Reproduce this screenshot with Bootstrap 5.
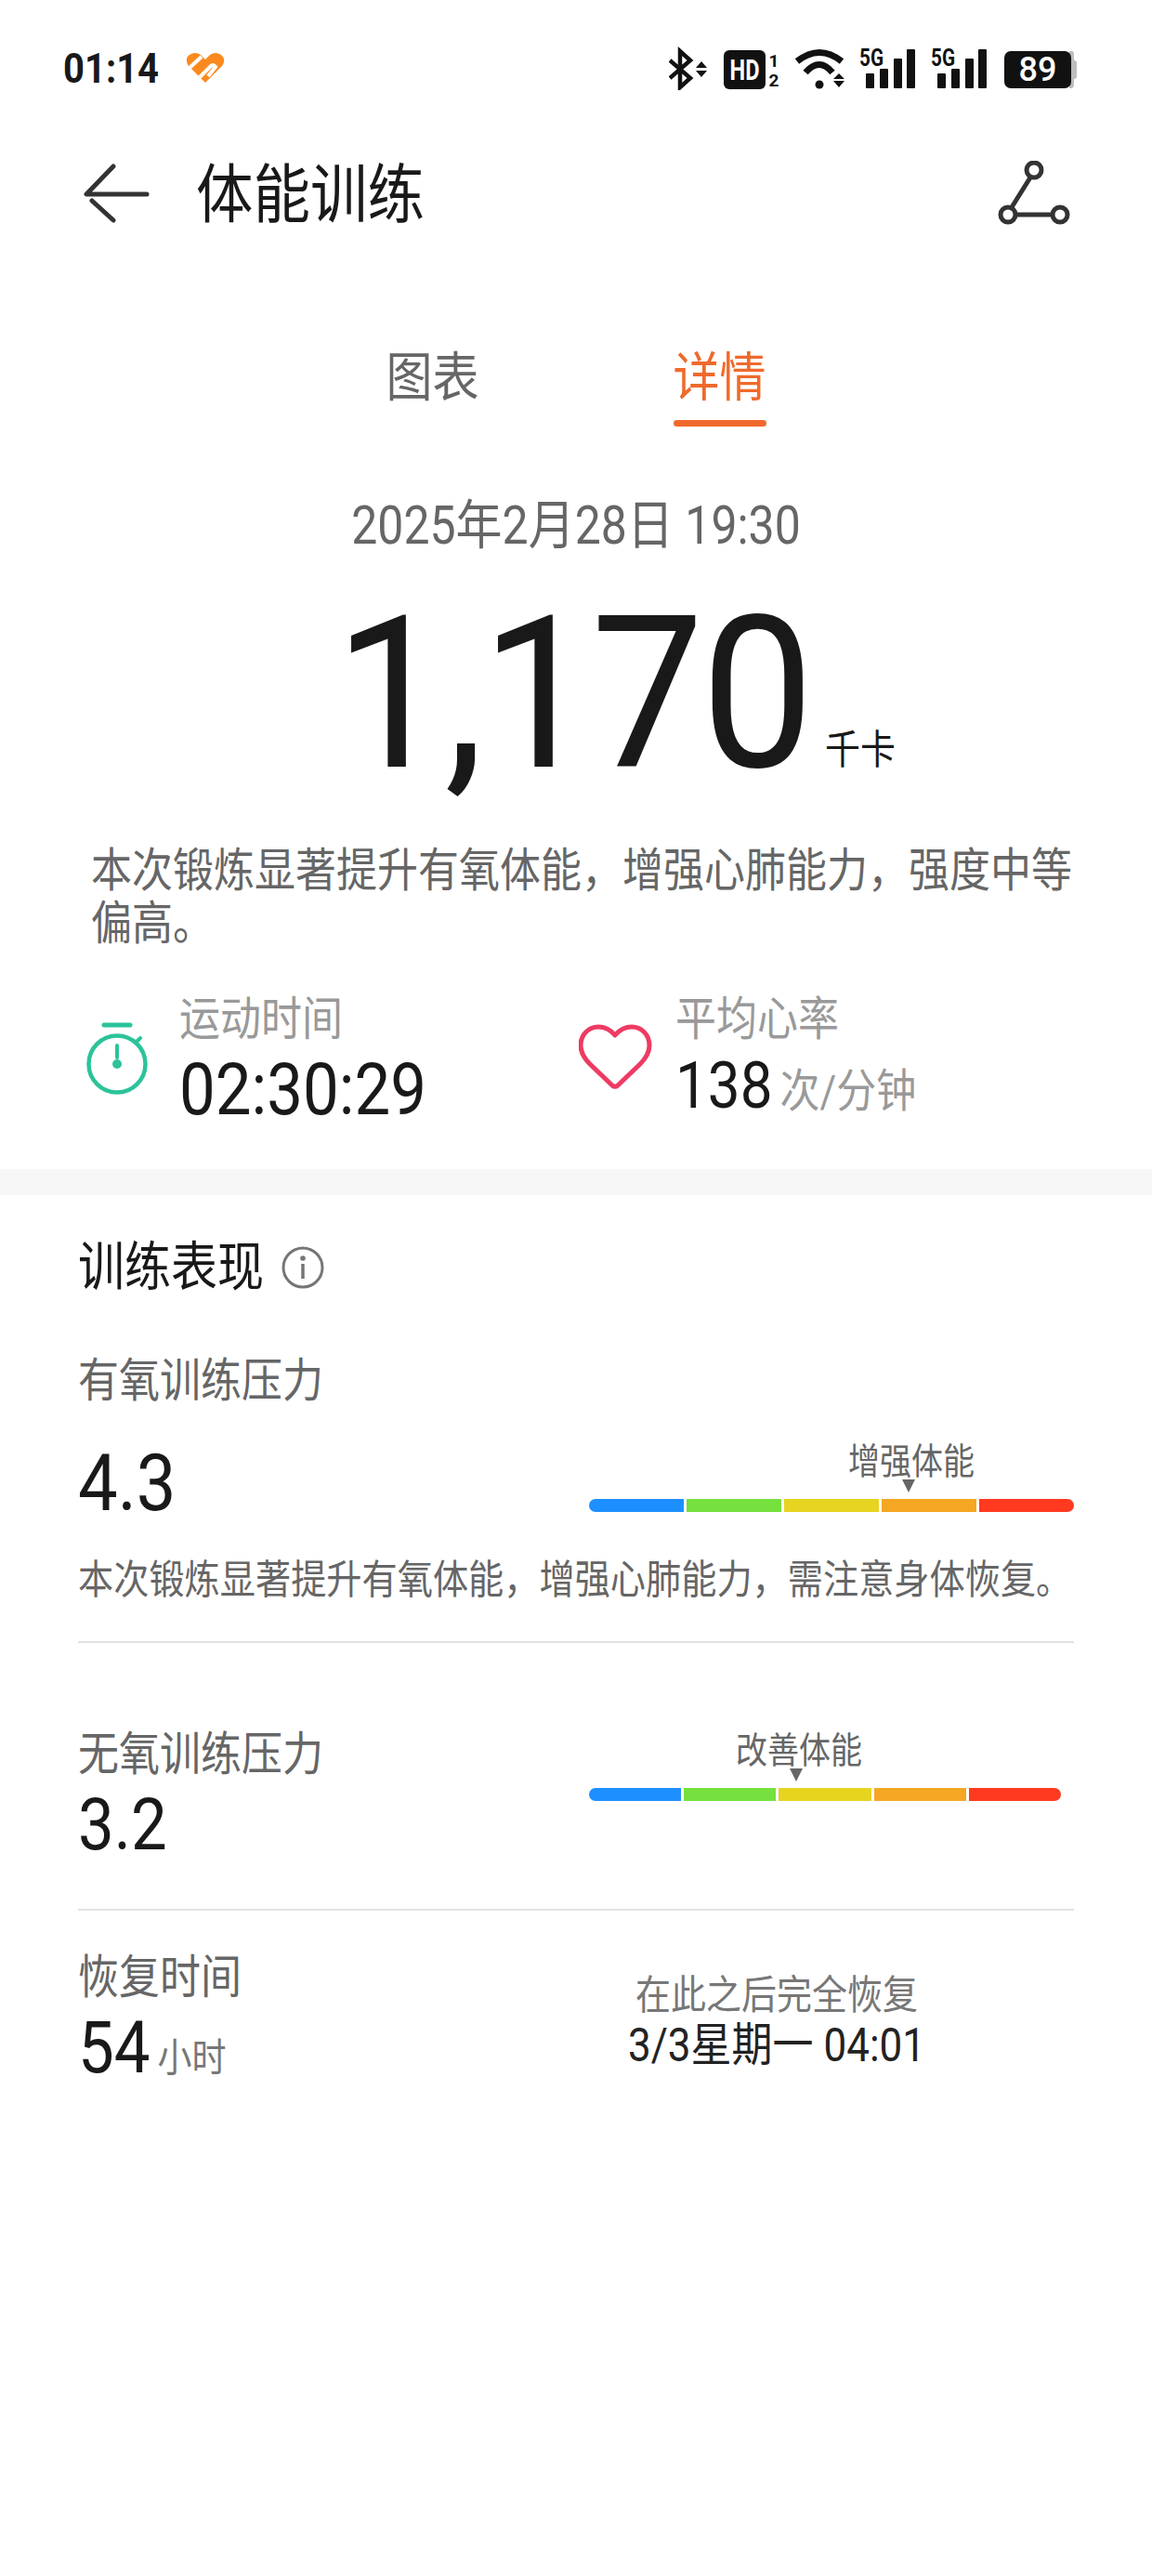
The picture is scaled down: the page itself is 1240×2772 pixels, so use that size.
<!DOCTYPE html>
<html lang="zh">
<head>
<meta charset="UTF-8">
<meta name="viewport" content="width=device-width, initial-scale=1.0">
<title>体能训练</title>
<link href="https://cdn.jsdelivr.net/npm/bootstrap@5.3.0/dist/css/bootstrap.min.css" rel="stylesheet">
<style>
body { background: #fff; font-family: Roboto, "Noto Sans CJK SC", sans-serif; color: #191919; }
.tall { display: inline-block; transform: scaleY(1.13); }
.status-row { height: 150px; padding: 47px 79px 0 68px; }
.status-left { gap: 29px; padding-top: 5px; }
.status-right { gap: 17px; }
.clock { font-size: 40px; font-weight: 700; line-height: 44px; }
.status-row svg { display: block; }
.wifi-icon { margin-right: -2px; }
.battery-icon { margin-left: 2px; }
.top-row { height: 116px; padding: 0 88px 0 90px; }
.page-title { font-size: 61.5px; line-height: 116px; margin-left: 49px; padding-top: 3px; }
.tab-row { margin-top: 106px; height: 87px; gap: 209px; }
.tab-item { width: 100px; text-align: center; font-size: 50px; line-height: 70px; color: #666; height: 87px; white-space: nowrap; }
.tab-on { color: #ef6a2c; }
.tab-line { height: 7px; margin-top: 10px; border-radius: 4px; background: #ef6a2c; }
.date-line { margin-top: 77px; font-size: 50px; line-height: 60px; color: #666; }
.big-row { margin-top: 47px; height: 210px; padding-left: 360px; }
.big-num { font-size: 216px; line-height: 210px; letter-spacing: -3px; transform: scaleY(1.06); }
.big-unit { font-size: 38px; line-height: 44px; margin: 0 0 24px 15px; }
.intro { margin: 56px 40px 0 98px; font-size: 44px; line-height: 57px; color: #666; }
.stat-row { margin-top: 46px; padding-left: 91px; }
.stat-left { width: 532px; gap: 32px; }
.stat-right { gap: 24px; }
.stat-label { font-size: 44px; line-height: 56px; color: #999; margin-bottom: 7px; }
.stat-val { font-size: 69px; line-height: 82px; }
.stat-val-box { height: 75px; margin-top: -7px; }
.stat-val-sm { font-size: 62px; }
.stat-unit { font-size: 43px; color: #999; margin-left: 8px; }
.stopwatch { margin-top: 31px; }
.heart-icon { margin-top: 33px; }
.band { height: 28px; background: #f7f7f7; margin-top: 44px; }
.perf { padding: 0 84px; }
.perf-head { margin-top: 48px; font-size: 50px; line-height: 60px; gap: 19px; }
.perf-label { font-size: 44px; line-height: 56px; color: #666; margin-bottom: 7px; }
.perf-val { font-size: 76px; line-height: 80px; margin-top: 4px; }
.perf-col { width: 550px; }
.label-a { margin-top: 64px; margin-bottom: 0; }
.row-a { margin-top: 38px; }
.row-b { margin-top: 92px; }
.row-c { margin-top: 44px; }
.meter { width: 522px; }
.meter-short { width: 508px; margin-top: 3px; }
.meter-tag { font-size: 34px; line-height: 40px; color: #666; white-space: nowrap; }
.meter-pin { width: fit-content; }
.meter-arrow { width: 0; height: 0; border-left: 7px solid transparent; border-right: 7px solid transparent; border-top: 14px solid #666; margin-left: -6px; }
.meter-bar { gap: 3px; height: 14px; margin-top: 7px; }
.meter-bar > div { flex: 1; }
.seg1 { background: #1e8fff; border-radius: 7px 0 0 7px; }
.seg2 { background: #76e03f; }
.seg3 { background: #e6d420; }
.seg4 { background: #f5a623; }
.seg5 { background: #ff3a20; border-radius: 0 7px 7px 0; }
.perf-note { margin-top: 39px; font-size: 38.2px; line-height: 50px; color: #666; white-space: nowrap; }
.rule { border-top: 2px solid #e2e2e2; }
.rule-a { margin-top: 41px; }
.rule-b { margin-top: 49px; }
.small-unit { font-size: 37px; color: #777; margin-left: 8px; }
.recover-col { width: 592px; }
.recover { width: 320px; padding-top: 20px; text-align: center; }
.recover-a { font-size: 38px; line-height: 54px; color: #777; white-space: nowrap; }
.recover-b { font-size: 44px; line-height: 54px; color: #222; white-space: nowrap; margin-left: -10px; margin-right: -10px; }
</style>
</head>
<body>

<div class="status-row d-flex justify-content-between">
    <div class="status-left d-flex align-items-start">
        <span class="clock tall">01:14</span>
        <svg width="42" height="34" viewBox="0 0 42 34" class="mt-1">
            <path d="M21 33 L3 15 Q-2 7 4 3 Q10 -1 16 3 L21 8 L26 3 Q32 -1 38 3 Q44 8 39 15 Z" fill="#fb8a1e"/>
            <path d="M4 17 L17 5 M15 27 L27 15 Q30 13 32 16 L24 26" stroke="#fff" stroke-width="4" fill="none"/>
        </svg>
    </div>
    <div class="status-right d-flex align-items-start">
        <svg width="42" height="50" viewBox="0 -6 42 50">
            <path d="M1 12 L23 31 L12 41 V2 L23 12 L1 31" fill="none" stroke="#111" stroke-width="4.5"/>
            <path d="M29 20 L35 13 L41 20 Z M29 23 L35 30 L41 23 Z" fill="#111"/>
        </svg>
        <svg width="60" height="50" viewBox="0 -6 60 50">
            <rect x="0" y="1" width="45" height="42" rx="6" fill="#111"/>
            <text x="22.5" y="33" text-anchor="middle" font-family="Roboto" font-weight="700" font-size="32" fill="#fff" textLength="32" lengthAdjust="spacingAndGlyphs">HD</text>
            <text x="54" y="19" text-anchor="middle" font-family="Roboto" font-weight="700" font-size="19" fill="#111">1</text>
            <text x="54" y="40" text-anchor="middle" font-family="Roboto" font-weight="700" font-size="19" fill="#111">2</text>
        </svg>
        <svg width="54" height="50" viewBox="0 -6 54 50" class="wifi-icon">
            <path d="M2 13 Q26 -6 50 13 M11 25 Q26 8 40 25" fill="none" stroke="#111" stroke-width="7"/>
            <circle cx="26" cy="38" r="4.5" fill="#111"/>
            <path d="M41 32 L47 26 L53 32 Z M41 34 L47 41 L53 34 Z" fill="#111"/>
        </svg>
        <svg width="60" height="50" viewBox="0 -6 60 50">
            <text x="0" y="18" font-family="Roboto" font-weight="700" font-size="26" fill="#111" textLength="26" lengthAdjust="spacingAndGlyphs">5G</text>
            <rect x="7" y="26" width="9" height="16" rx="1" fill="#111"/>
            <rect x="22" y="21" width="9" height="21" rx="1" fill="#111"/>
            <rect x="37" y="10" width="9" height="32" rx="1" fill="#111"/>
            <rect x="51" y="0" width="9" height="42" rx="1" fill="#111"/>
        </svg>
        <svg width="60" height="50" viewBox="0 -6 60 50">
            <text x="0" y="18" font-family="Roboto" font-weight="700" font-size="26" fill="#111" textLength="26" lengthAdjust="spacingAndGlyphs">5G</text>
            <rect x="7" y="26" width="9" height="16" rx="1" fill="#111"/>
            <rect x="22" y="21" width="9" height="21" rx="1" fill="#111"/>
            <rect x="37" y="10" width="9" height="32" rx="1" fill="#111"/>
            <rect x="51" y="0" width="9" height="42" rx="1" fill="#111"/>
        </svg>
        <svg width="80" height="50" viewBox="0 -6 80 50" class="battery-icon">
            <path d="M70 2 H73 Q75 2 75 6 V12 Q78 12 78 15 V29 Q78 32 75 32 V38 Q75 42 72 42 H70 Z" fill="#bdbdbd"/>
            <rect x="0" y="2" width="72" height="40" rx="7" fill="#111"/>
            <text x="36" y="34" text-anchor="middle" font-family="Roboto" font-weight="500" font-size="36" fill="#fff">89</text>
        </svg>
    </div>
</div>

<div class="top-row d-flex align-items-center">
    <svg width="72" height="64" viewBox="0 0 72 64">
        <path d="M32 3 L3 33 H68 M9 40 L32 61" fill="none" stroke="#333" stroke-width="5" stroke-linecap="round" stroke-linejoin="round"/>
    </svg>
    <div class="page-title flex-grow-1"><span class="tall">体能训练</span></div>
    <svg width="78" height="70" viewBox="0 0 78 70">
        <path d="M35 18 L15 50 M19 58 H59" fill="none" stroke="#333" stroke-width="5"/>
        <circle cx="39" cy="10" r="8" fill="none" stroke="#333" stroke-width="5"/>
        <circle cx="11" cy="58" r="8" fill="none" stroke="#333" stroke-width="5"/>
        <circle cx="67" cy="58" r="8" fill="none" stroke="#333" stroke-width="5"/>
    </svg>
</div>

<div class="tab-row d-flex justify-content-center">
    <div class="tab-item"><span class="tall">图表</span></div>
    <div class="tab-item tab-on"><span class="tall">详情</span><div class="tab-line"></div></div>
</div>

<div class="date-line text-center"><span class="tall">2025年2月28日 19:30</span></div>

<div class="big-row d-flex align-items-end">
    <span class="big-num tall">1,170</span>
    <span class="big-unit tall">千卡</span>
</div>

<p class="intro mb-0"><span class="tall">本次锻炼显著提升有氧体能，增强心肺能力，强度中等</span><br><span class="tall">偏高。</span></p>

<div class="stat-row d-flex">
    <div class="stat-left d-flex align-items-start">
        <svg width="70" height="80" viewBox="0 0 70 80" class="stopwatch">
            <path d="M21 3 H49" stroke="#2cc39a" stroke-width="5" stroke-linecap="round" fill="none"/>
            <circle cx="35" cy="45" r="30.5" fill="none" stroke="#2cc39a" stroke-width="4.5"/>
            <path d="M35 25 V38 M55 22 L60 17" stroke="#2cc39a" stroke-width="4" stroke-linecap="round" fill="none"/>
            <circle cx="35" cy="45" r="5" fill="#2cc39a"/>
        </svg>
        <div>
            <div class="stat-label"><span class="tall">运动时间</span></div>
            <div class="stat-val"><span class="tall">02:30:29</span></div>
        </div>
    </div>
    <div class="stat-right d-flex align-items-start">
        <svg width="80" height="72" viewBox="0 0 80 72" class="heart-icon">
            <path d="M39 12 C34 6 28 3 21 3 C10 3 2 12 2 23 C2 31 6 37 12 43 L36 66 Q39 68.5 42 66 L66 43 C72 37 76 31 76 23 C76 12 68 3 57 3 C50 3 44 6 39 12 Z" fill="none" stroke="#ee3b63" stroke-width="5" stroke-linejoin="round"/>
        </svg>
        <div>
            <div class="stat-label"><span class="tall">平均心率</span></div>
            <div class="stat-val stat-val-box"><span class="stat-val-sm tall">138</span><span class="stat-unit tall">次/分钟</span></div>
        </div>
    </div>
</div>

<div class="band"></div>

<div class="perf">
    <div class="perf-head d-flex align-items-center">
        <span class="tall">训练表现</span>
        <svg width="46" height="46" viewBox="0 0 46 46">
            <circle cx="23" cy="23" r="21" fill="none" stroke="#757575" stroke-width="3"/>
            <circle cx="23" cy="13" r="2.8" fill="#757575"/>
            <path d="M23 19 V35" stroke="#757575" stroke-width="3.5"/>
        </svg>
    </div>

    <div class="perf-label label-a"><span class="tall">有氧训练压力</span></div>
    <div class="row-a d-flex align-items-start">
        <div class="perf-col perf-val"><span class="tall">4.3</span></div>
        <div class="meter">
            <div class="meter-pin d-flex flex-column align-items-center" style="margin-left: 279px">
                <span class="meter-tag tall">增强体能</span>
                <span class="meter-arrow"></span>
            </div>
            <div class="meter-bar d-flex">
                <div class="seg1"></div><div class="seg2"></div><div class="seg3"></div><div class="seg4"></div><div class="seg5"></div>
            </div>
        </div>
    </div>
    <div class="perf-note"><span class="tall">本次锻炼显著提升有氧体能，增强心肺能力，需注意身体恢复。</span></div>
    <div class="rule rule-a"></div>

    <div class="row-b d-flex align-items-start">
        <div class="perf-col">
            <div class="perf-label"><span class="tall">无氧训练压力</span></div>
            <div class="stat-val"><span class="tall">3.2</span></div>
        </div>
        <div class="meter meter-short">
            <div class="meter-pin d-flex flex-column align-items-center" style="margin-left: 158px">
                <span class="meter-tag tall">改善体能</span>
                <span class="meter-arrow"></span>
            </div>
            <div class="meter-bar d-flex">
                <div class="seg1"></div><div class="seg2"></div><div class="seg3"></div><div class="seg4"></div><div class="seg5"></div>
            </div>
        </div>
    </div>
    <div class="rule rule-b"></div>

    <div class="row-c d-flex">
        <div class="recover-col">
            <div class="perf-label"><span class="tall">恢复时间</span></div>
            <div class="stat-val"><span class="tall">54</span><span class="small-unit tall">小时</span></div>
        </div>
        <div class="recover">
            <div class="recover-a"><span class="tall">在此之后完全恢复</span></div>
            <div class="recover-b"><span class="tall">3/3星期一 04:01</span></div>
        </div>
    </div>
</div>

<script src="https://cdn.jsdelivr.net/npm/bootstrap@5.3.0/dist/js/bootstrap.bundle.min.js"></script>
</body>
</html>
